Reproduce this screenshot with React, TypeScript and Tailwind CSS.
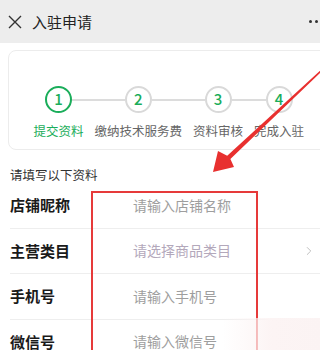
import React from 'react';
import { ChevronRight } from 'lucide-react';

const steps = [
  { n: '1', label: '提交资料', active: true },
  { n: '2', label: '缴纳技术服务费', active: false },
  { n: '3', label: '资料审核', active: false },
  { n: '4', label: '完成入驻', active: false },
];

const rows = [
  { label: '店铺昵称', hint: '请输入店铺名称', select: false },
  { label: '主营类目', hint: '请选择商品类目', select: true },
  { label: '手机号', hint: '请输入手机号', select: false },
  { label: '微信号', hint: '请输入微信号', select: false },
];

export default function App() {
  return (
    <div className="relative w-[320px] h-[350px] overflow-hidden bg-white font-['Noto_Sans_CJK_SC',sans-serif]">
      {/* nav bar */}
      <div className="flex items-center h-[43px] bg-[#ededed]">
        <svg width="14" height="14" viewBox="0 0 14 14" className="ml-[8px]">
          <path d="M1 1L13 13M13 1L1 13" stroke="#333" strokeWidth="1.4" />
        </svg>
        <span className="ml-[10px] text-[15px] text-[#222] leading-none">入驻申请</span>
        <div className="ml-auto mr-[-4px] flex gap-[3px]">
          <span className="w-[3px] h-[3px] rounded-full bg-[#333]" />
          <span className="w-[3px] h-[3px] rounded-full bg-[#333]" />
          <span className="w-[3px] h-[3px] rounded-full bg-[#333]" />
        </div>
      </div>

      {/* steps card */}
      <div className="pt-[7px] pl-[8px]">
        <div className="w-[340px] h-[100px] border border-[#ececec] rounded-lg flex pl-[19px] pt-[35px]">
          {steps.map((s, i) => (
            <div key={s.n} className="flex flex-col items-center">
              <div className="flex items-center w-full">
                <div className={`flex-1 h-[2px] ${i === 0 ? 'bg-transparent' : 'bg-[#dcdcdc]'}`} />
                <div
                  className={`w-[27px] h-[27px] rounded-full flex items-center justify-center text-[15px] font-medium text-[#1aad5a] ${
                    s.active ? 'border-[2.5px] border-[#1aad5a]' : 'border-2 border-[#d9d9d9]'
                  }`}
                >
                  {s.n}
                </div>
                <div className={`flex-1 h-[2px] ${i === steps.length - 1 ? 'bg-transparent' : 'bg-[#dcdcdc]'}`} />
              </div>
              <span
                className={`mt-[9px] px-[5.5px] text-[12.5px] leading-[17px] whitespace-nowrap ${
                  s.active ? 'text-[#1aad5a]' : 'text-[#666]'
                }`}
              >
                {s.label}
              </span>
            </div>
          ))}
        </div>
      </div>

      {/* form */}
      <div className="mt-[16px] pl-[10px] text-[12.5px] leading-[17px] text-[#333]">请填写以下资料</div>
      <div className="mt-[0px]">
        {rows.map((r) => (
          <div key={r.label} className="ml-[10px] h-[45.5px] flex items-center border-b border-[#eeeeee]">
            <span className="w-[123px] text-[15px] font-bold text-[#1a1a1a]">{r.label}</span>
            <span className={`text-[14px] ${r.select ? 'text-[#b3a8bb]' : 'text-[#9e9e9e]'}`}>{r.hint}</span>
            {r.select && <ChevronRight className="ml-auto mr-[4px] text-[#bbb]" size={14} strokeWidth={1.6} />}
          </div>
        ))}
      </div>

      {/* annotation: red box */}
      <div className="absolute left-[91px] top-[191px] w-[167px] h-[200px] border-[2.5px] border-[#e63a3a]" />
      <div className="absolute left-[222px] top-[318px] w-[100px] h-[34px] bg-gradient-to-r from-[#fdf7f7]/0 via-[#fcf4f4] to-[#fbf3f3]" />

      {/* annotation: arrow */}
      <svg className="absolute inset-0" width="320" height="350" viewBox="0 0 320 350">
        <polygon
          points="213,172 218,151 227.2,155.8 321.5,69.5 322.5,70.5 230.4,159 234,167"
          fill="#e8302f"
        />
      </svg>
    </div>
  );
}
